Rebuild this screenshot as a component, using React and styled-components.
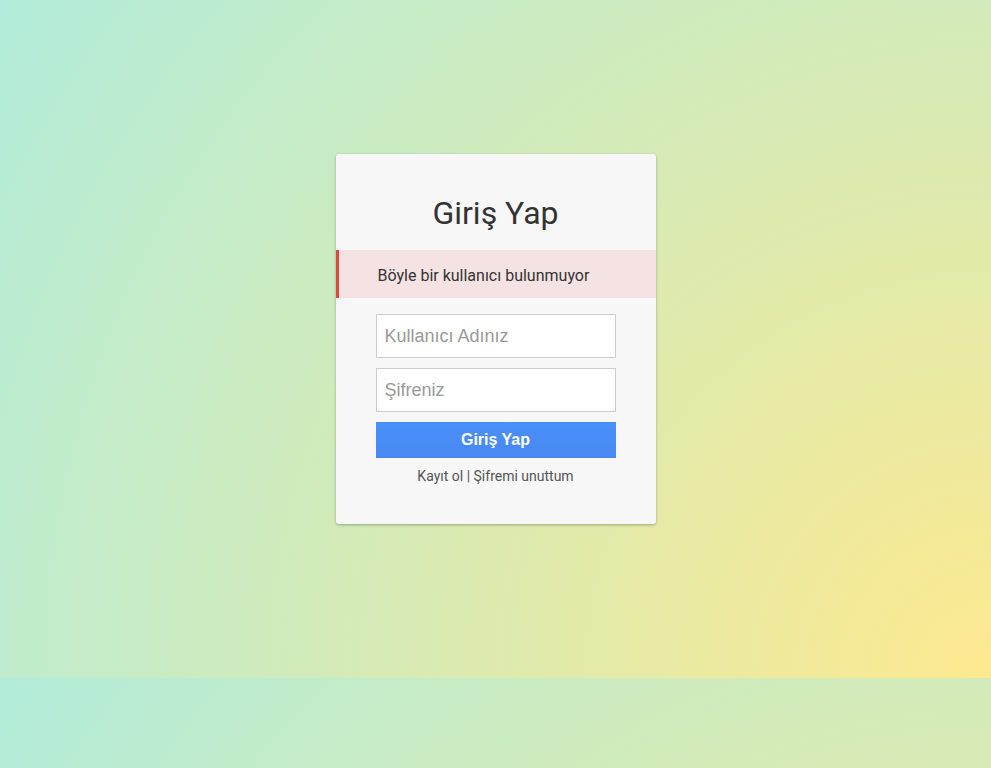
import styled, {createGlobalStyle} from "styled-components";

const GlobalStyle = createGlobalStyle`
  html, body {
    margin: 0;
    padding: 0;
  }
  body {
    min-height: 768px;
    background-image: radial-gradient(circle farthest-corner at bottom right, #fde98f, #b1ecda);
    background-size: 100% 678px;
    background-repeat: repeat-y;
    font-family: Roboto, "Liberation Sans", sans-serif;
  }
`;

const Page = styled.div`
  height: 678px;
  display: flex;
  justify-content: center;
  align-items: flex-start;
  padding-top: 154px;
  box-sizing: border-box;
`;

const Card = styled.div`
  width: 320px;
  height: 370px;
  box-sizing: border-box;
  background: #f7f7f7;
  border-radius: 3px;
  box-shadow: 0 1px 3px rgba(0, 0, 0, 0.3);
  padding-top: 38px;
  display: flex;
  flex-direction: column;
`;

const Title = styled.h1`
  margin: 0;
  font-family: Roboto, sans-serif;
  font-weight: 400;
  font-size: 32px;
  line-height: 42px;
  color: #333;
  text-align: center;
`;

const Alert = styled.div`
  margin-top: 16px;
  height: 48px;
  box-sizing: border-box;
  background: #f5e3e3;
  border-left: 3px solid #e0483d;
  padding: 2px 0 0 39px;
  display: flex;
  align-items: center;
  font-size: 16px;
  color: #333;
`;

const Form = styled.form`
  margin-top: 16px;
  display: flex;
  flex-direction: column;
  align-items: center;
  gap: 10px;
`;

const Input = styled.input`
  width: 240px;
  height: 44px;
  box-sizing: border-box;
  border: 1px solid #ccc;
  background: #fff;
  padding: 0 8px;
  font-family: Arial, "Liberation Sans", sans-serif;
  font-size: 18px;
  color: #333;
  outline: none;
  &::placeholder {
    color: #999;
  }
`;

const Button = styled.button`
  width: 240px;
  height: 36px;
  border: 0;
  background: linear-gradient(#4b8ffa, #4788f1);
  color: #fff;
  font-family: Arial, "Liberation Sans", sans-serif;
  font-weight: bold;
  font-size: 16px;
  cursor: pointer;
`;

const Links = styled.div`
  margin-top: 10px;
  text-align: center;
  font-size: 14px;
  color: #555;
  a {
    color: #555;
    text-decoration: none;
  }
`;

export default function App() {
  return (
    <>
      <GlobalStyle />
      <Page>
        <Card>
          <Title>Giriş Yap</Title>
          <Alert>Böyle bir kullanıcı bulunmuyor</Alert>
          <Form onSubmit={ev => ev.preventDefault()}>
            <Input type="text" placeholder="Kullanıcı Adınız" />
            <Input type="password" placeholder="Şifreniz" />
            <Button type="submit">Giriş Yap</Button>
          </Form>
          <Links>
            <a href="#">Kayıt ol</a> | <a href="#">Şifremi unuttum</a>
          </Links>
        </Card>
      </Page>
    </>
  );
}
